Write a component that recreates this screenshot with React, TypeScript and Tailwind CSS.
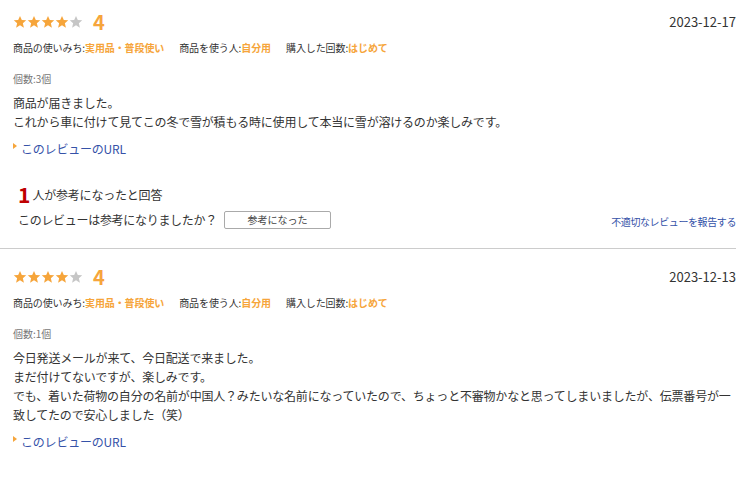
import React from 'react'

type Review = {
  rating: number
  date: string
  usage: string
  user: string
  times: string
  count: string
  body: string[]
  helpful?: number
}

const reviews: Review[] = [
  {
    rating: 4,
    date: '2023-12-17',
    usage: '実用品・普段使い',
    user: '自分用',
    times: 'はじめて',
    count: '個数:3個',
    body: [
      '商品が届きました。',
      'これから車に付けて見てこの冬で雪が積もる時に使用して本当に雪が溶けるのか楽しみです。',
    ],
    helpful: 1,
  },
  {
    rating: 4,
    date: '2023-12-13',
    usage: '実用品・普段使い',
    user: '自分用',
    times: 'はじめて',
    count: '個数:1個',
    body: [
      '今日発送メールが来て、今日配送で来ました。',
      'まだ付けてないですが、楽しみです。',
      'でも、着いた荷物の自分の名前が中国人？みたいな名前になっていたので、ちょっと不審物かなと思ってしまいましたが、伝票番号が一致してたので安心しました（笑）',
    ],
  },
]

function Star({ filled }: { filled: boolean }) {
  return (
    <svg width="14" height="14" viewBox="0 0 24 24" className="shrink-0">
      <path
        d="M12 1.5l3.1 7.1 7.6.6-5.8 5 1.8 7.5L12 17.7l-6.7 4 1.8-7.5-5.8-5 7.6-.6z"
        fill={filled ? '#f6a53b' : '#c6c6c6'}
      />
    </svg>
  )
}

function ReviewItem({ review, className }: { review: Review; className?: string }) {
  return (
    <div className={`border-b border-[#cccccc] pl-[13px] ${className ?? ''}`}>
      {/* header: stars + score + date */}
      <div className="flex h-[26px] items-center justify-between">
        <div className="flex items-center">
          <div className="flex">
            {[0, 1, 2, 3, 4].map((i) => (
              <Star key={i} filled={i < review.rating} />
            ))}
          </div>
          <span className="ml-[10px] text-[20px] font-bold leading-none text-[#f6a53b]">{review.rating}</span>
        </div>
        <span className="text-[13px] text-[#333333]">{review.date}</span>
      </div>

      {/* purchase info */}
      <div className="mt-[6px] flex gap-[15px] text-[10px] leading-[14px] tracking-[-0.1px] text-[#333333]">
        <span>
          商品の使いみち:<span className="font-bold text-[#f6a53b]">{review.usage}</span>
        </span>
        <span>
          商品を使う人:<span className="font-bold text-[#f6a53b]">{review.user}</span>
        </span>
        <span>
          購入した回数:<span className="font-bold text-[#f6a53b]">{review.times}</span>
        </span>
      </div>

      <div className="mt-[17px] text-[10px] leading-[14px] text-[#777777]">{review.count}</div>

      {/* body */}
      <div className="mt-[7px] text-[12px] leading-[19.3px] tracking-[-0.2px] text-[#333333]">
        {review.body.map((line, i) => (
          <p key={i}>{line}</p>
        ))}
      </div>

      <div className="mt-[8px] flex h-[18px] items-center">
        <span className="mb-[6px] h-0 w-0 border-y-[3.5px] border-l-[4px] border-y-transparent border-l-[#f6a53b]" />
        <a className="ml-[4px] text-[12px] tracking-[-0.2px] text-[#3552a8]">このレビューのURL</a>
      </div>

      {review.helpful !== undefined && (
        <div className="pb-[18px]">
          <div className="mt-[25px] flex h-[24px] items-center pl-[5px]">
            <span className="text-[21px] font-bold leading-none text-[#bf0000]">{review.helpful}</span>
            <span className="ml-[2px] text-[12px] tracking-[-0.2px] text-[#333333]">人が参考になったと回答</span>
          </div>
          <div className="mt-[3px] flex h-[20px] items-center justify-between pl-[5px]">
            <div className="flex items-center">
              <span className="text-[12px] tracking-[-0.3px] text-[#333333]">このレビューは参考になりましたか？</span>
              <button className="ml-[7px] h-[18px] w-[107px] rounded-[2px] border border-[#aaaaaa] bg-white text-[10px] leading-none text-[#444444]">
                参考になった
              </button>
            </div>
            <a className="mt-[4px] text-[10px] tracking-[-0.4px] text-[#3552a8]">不適切なレビューを報告する</a>
          </div>
        </div>
      )}
    </div>
  )
}

export default function App() {
  return (
    <div
      className="h-[481px] w-[746px] overflow-hidden bg-white"
      style={{ fontFamily: '"Noto Sans CJK JP", "Noto Sans", sans-serif' }}
    >
      <div className="w-[736px]">
        <ReviewItem review={reviews[0]} className="pt-[9px]" />
        <ReviewItem review={reviews[1]} className="border-b-0 pt-[15px]" />
      </div>
    </div>
  )
}
